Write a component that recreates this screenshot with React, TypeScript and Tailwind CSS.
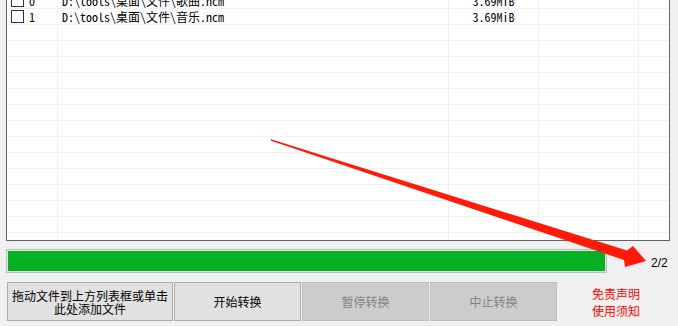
import React from "react";

type Row = { idx: string; path: string; size: string };

const rows: Row[] = [
  { idx: "0", path: "D:\\tools\\桌面\\文件\\歌曲.ncm", size: "3.69MiB" },
  { idx: "1", path: "D:\\tools\\桌面\\文件\\音乐.ncm", size: "3.69MiB" },
];

const mono = {
  fontFamily:
    '"Noto Sans Mono CJK SC", "Liberation Mono", "Noto Sans CJK SC", monospace',
};

function ListRow({ row }: { row?: Row }) {
  return (
    <div className="flex h-[16px] border-b border-[#f0f0f0] text-[12px] leading-[15px] text-black">
      <div className="w-[51px] border-r border-[#f0f0f0] flex items-center pl-[4px] shrink-0">
        {row && (
          <>
            <span className="w-[13px] h-[13px] border border-[#333333] bg-white shrink-0" />
            <span className="ml-[5px]" style={mono}>
              {row.idx}
            </span>
          </>
        )}
      </div>
      <div
        className="w-[391px] border-r border-[#f0f0f0] pl-[4px] whitespace-nowrap shrink-0"
        style={mono}
      >
        {row?.path}
      </div>
      <div
        className="w-[90px] border-r border-[#f0f0f0] text-center whitespace-nowrap shrink-0"
        style={mono}
      >
        {row?.size}
      </div>
      <div className="w-[100px] border-r border-[#f0f0f0] shrink-0" />
      <div className="flex-1" />
    </div>
  );
}

function Btn({
  children,
  disabled,
  w,
}: {
  children: React.ReactNode;
  disabled?: boolean;
  w: string;
}) {
  return (
    <div
      className={
        "h-[39px] flex flex-col items-center justify-center border text-[12px] leading-[13px] " +
        w +
        " " +
        (disabled
          ? "bg-[#cccccc] border-[#bfbfbf] text-[#838383]"
          : "bg-[#e1e1e1] border-[#adadad] text-black")
      }
      style={{ fontFamily: '"Noto Sans CJK SC", sans-serif' }}
    >
      {children}
    </div>
  );
}

export default function App() {
  const empty = Array.from({ length: 14 });
  return (
    <div className="relative w-[678px] h-[326px] bg-[#f0f0f0] overflow-hidden">
      {/* file list */}
      <div className="ml-[6px] w-[664px] h-[241px] bg-white border-l border-r border-b border-[#646464] overflow-hidden">
        <div className="-mt-[7px]">
          {rows.map((r) => (
            <ListRow key={r.idx} row={r} />
          ))}
          {empty.map((_, i) => (
            <ListRow key={i} />
          ))}
        </div>
      </div>

      {/* progress */}
      <div className="flex items-center mt-[8px] h-[24px]">
        <div className="ml-[6px] w-[601px] h-[24px] border border-[#bcbcbc] bg-[#e6e6e6] p-[1px]">
          <div className="h-full w-full bg-[#06b025]" />
        </div>
        <span
          className="ml-[44px] mt-[3px] text-[12px] text-black"
          style={{ fontFamily: '"Liberation Sans", sans-serif' }}
        >
          2/2
        </span>
      </div>

      {/* buttons */}
      <div className="flex mt-[9px] ml-[7px] gap-[1px] items-start">
        <Btn w="w-[166px]">
          <span>拖动文件到上方列表框或单击</span>
          <span>此处添加文件</span>
        </Btn>
        <Btn w="w-[127px]">开始转换</Btn>
        <Btn w="w-[127px]" disabled>
          暂停转换
        </Btn>
        <Btn w="w-[127px]" disabled>
          中止转换
        </Btn>
        <div
          className="flex-1 flex flex-col items-center pt-[3px] pr-[4px] text-[12px] leading-[17px] text-[#ff0000]"
          style={{ fontFamily: '"Noto Sans CJK SC", sans-serif' }}
        >
          <span>免责声明</span>
          <span>使用须知</span>
        </div>
      </div>

      {/* annotation arrow */}
      <svg
        className="absolute left-0 top-0 pointer-events-none"
        width="678"
        height="326"
        viewBox="0 0 678 326"
      >
        <polygon
          points="271,139.3 627,250.5 633,246 646,261 625,267 624,260 271,140.7"
          fill="#ff1a0a"
        />
      </svg>
    </div>
  );
}
